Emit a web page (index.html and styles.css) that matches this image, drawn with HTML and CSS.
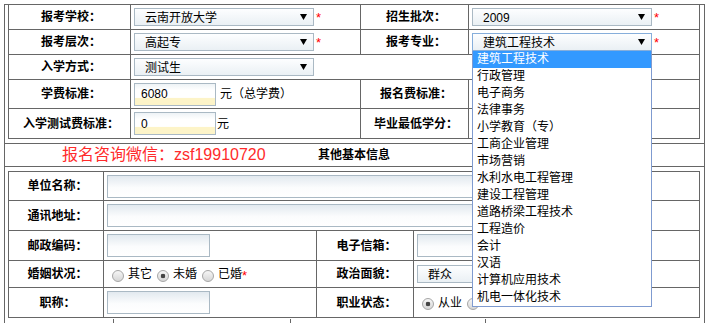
FILE: index.html
```html
<!DOCTYPE html>
<html lang="zh-CN">
<head>
<meta charset="utf-8">
<title>报名信息</title>
<link rel="stylesheet" href="styles.css">
</head>
<body>
<div class="frame">
  <div class="grid g1">
    <div class="c lbl">报考学校：</div>
    <div class="c val"><div class="sel"><span>云南开放大学</span><svg class="arr" width="7" height="6" viewBox="0 0 7 6"><path d="M0 0H7L3.5 6Z"/></svg></div><i class="req">*</i></div>
    <div class="c lbl">招生批次：</div>
    <div class="c val"><div class="sel"><span>2009</span><svg class="arr" width="7" height="6" viewBox="0 0 7 6"><path d="M0 0H7L3.5 6Z"/></svg></div><i class="req">*</i></div>

    <div class="c lbl">报考层次：</div>
    <div class="c val"><div class="sel"><span>高起专</span><svg class="arr" width="7" height="6" viewBox="0 0 7 6"><path d="M0 0H7L3.5 6Z"/></svg></div><i class="req">*</i></div>
    <div class="c lbl">报考专业：</div>
    <div class="c val"><div class="sel open"><span>建筑工程技术</span><svg class="arr" width="7" height="6" viewBox="0 0 7 6"><path d="M0 0H7L3.5 6Z"/></svg>
      <ul class="dd">
        <li class="hl">建筑工程技术</li>
        <li>行政管理</li>
        <li>电子商务</li>
        <li>法律事务</li>
        <li>小学教育（专）</li>
        <li>工商企业管理</li>
        <li>市场营销</li>
        <li>水利水电工程管理</li>
        <li>建设工程管理</li>
        <li>道路桥梁工程技术</li>
        <li>工程造价</li>
        <li>会计</li>
        <li>汉语</li>
        <li>计算机应用技术</li>
        <li>机电一体化技术</li>
      </ul></div><i class="req">*</i></div>

    <div class="c lbl">入学方式：</div>
    <div class="c val span3"><div class="sel"><span>测试生</span><svg class="arr" width="7" height="6" viewBox="0 0 7 6"><path d="M0 0H7L3.5 6Z"/></svg></div></div>

    <div class="c lbl">学费标准：</div>
    <div class="c val"><input class="txt fee" type="text" value="6080"><span class="unit">元（总学费）</span></div>
    <div class="c lbl">报名费标准：</div>
    <div class="c val"></div>

    <div class="c lbl">入学测试费标准：</div>
    <div class="c val"><input class="txt fee" type="text" value="0"><span class="unit tight">元</span></div>
    <div class="c lbl">毕业最低学分：</div>
    <div class="c val"></div>
  </div>

  <div class="title">
    <span class="wx">报名咨询微信：zsf19910720</span>
    <span class="sub">其他基本信息</span>
  </div>

  <div class="grid g2">
    <div class="c lbl">单位名称：</div>
    <div class="c val span3"><input class="txt wide" type="text"></div>

    <div class="c lbl">通讯地址：</div>
    <div class="c val span3"><input class="txt wide" type="text"></div>

    <div class="c lbl">邮政编码：</div>
    <div class="c val"><input class="txt short" type="text"></div>
    <div class="c lbl">电子信箱：</div>
    <div class="c val"><input class="txt mid" type="text"></div>

    <div class="c lbl">婚姻状况：</div>
    <div class="c val radios">
      <input class="rd" type="radio" name="hy"><span class="rt">其它</span>
      <input class="rd" type="radio" name="hy" checked><span class="rt">未婚</span>
      <input class="rd" type="radio" name="hy"><span class="rt last">已婚</span><i class="req">*</i>
    </div>
    <div class="c lbl">政治面貌：</div>
    <div class="c val"><div class="sel small"><span>群众</span><svg class="arr" width="7" height="6" viewBox="0 0 7 6"><path d="M0 0H7L3.5 6Z"/></svg></div></div>

    <div class="c lbl">职称：</div>
    <div class="c val"><input class="txt short" type="text"></div>
    <div class="c lbl">职业状态：</div>
    <div class="c val radios">
      <input class="rd" type="radio" name="zy" checked><span class="rt">从业</span>
      <input class="rd" type="radio" name="zy" aria-label="待业">
    </div>
  </div>

  <div class="g3">
    <div class="c3"></div>
    <div class="c3"></div>
    <div class="c3"></div>
    <div class="c3 none"></div>
  </div>
</div>
</body>
</html>
```

FILE: styles.css
```css
* { box-sizing: border-box; }

body {
  margin: 4px 0 0 4px;
  font-family: "Liberation Sans", "Noto Sans CJK SC", sans-serif;
  font-size: 12px;
  line-height: 16px;
  color: #000;
  background: #fff;
}

.frame {
  width: 701px;
  border: 1px solid #666;
  border-bottom: 0;
}

.grid {
  display: grid;
  width: 692px;
  margin-left: 3px;
  border-left: 1px solid #666;
}

.g1 {
  grid-template-columns: 122px 230px 108px 231px;
  grid-template-rows: 25px 25px 25px 29px 30px;
}

.g2 {
  margin-top: 4px;
  border-top: 1px solid #666;
  grid-template-columns: 95px 213px 97px 286px;
  grid-template-rows: 29px 30px 30px 27px 30px;
}

.c {
  display: flex;
  align-items: center;
  min-width: 0;
  border-right: 1px solid #666;
  border-bottom: 1px solid #666;
}

.lbl {
  justify-content: center;
  font-weight: bold;
  white-space: nowrap;
  padding-left: 3px;
}

.val { padding-left: 3px; }

.span3 { grid-column: span 3; }

.req {
  font-style: normal;
  color: #f00;
  font-size: 13px;
  margin-left: 2px;
  align-self: flex-start;
  margin-top: 5px;
}

.radios .req { margin-top: 7px; margin-left: 0; }

.sel {
  position: relative;
  width: 180px;
  height: 18px;
  border: 1px solid #aab9c4;
  background: linear-gradient(#fdfeff, #eaf0f4);
  display: flex;
  align-items: center;
  justify-content: space-between;
  padding: 2px 6px 0 10px;
  white-space: nowrap;
}

.sel.small { height: 18px; width: 130px; }

.sel.open {
  border-color: #86aedb;
  z-index: 10;
}

.arr { fill: #000; margin-top: -2px; }

.dd {
  position: absolute;
  top: calc(100% + 1px);
  left: -1px;
  width: 180px;
  margin: 0;
  padding: 0;
  list-style: none;
  background: #fff;
  border: 1px solid #7f9bd0;
  border-top: 0;
}

.dd li {
  height: 17px;
  line-height: 17px;
  padding-left: 4px;
  white-space: nowrap;
}

.dd li.hl {
  background: #3399ff;
  color: #fff;
}

.txt {
  height: 23px;
  margin: 0;
  border: 1px solid #aab9c4;
  background: linear-gradient(#e2e9ef, #fbfcfd 55%, #fff);
  padding: 0 6px;
  font: inherit;
  color: #000;
  outline: none;
}

.fee {
  width: 82px;
  background: linear-gradient(#eef3f6 0%, #fff 30%, #fff 64%, #fdf4c8 68%, #fdf4c8 100%);
}

.wide { width: 440px; }
.short { width: 103px; }
.mid { width: 150px; }

.unit { margin-left: 4px; white-space: nowrap; }
.unit.tight { margin-left: 1px; }

.title {
  margin-top: 4px;
  height: 24px;
  border-top: 1px solid #666;
  border-bottom: 1px solid #666;
  display: grid;
  grid-template-columns: 313px auto;
  align-items: center;
}

.wx {
  padding-left: 57px;
  color: #ff2b2b;
  font-size: 16px;
  line-height: 20px;
  white-space: nowrap;
}

.sub { font-weight: bold; }

.radios { padding-left: 8px; }

.rd {
  appearance: none;
  -webkit-appearance: none;
  width: 12px;
  height: 12px;
  margin: 3px 4px 0 0;
  border-radius: 50%;
  border: 1px solid #a6a6a6;
  background: linear-gradient(#f6f6f6, #d6d6d6);
  flex: none;
}

.rd:checked {
  background: radial-gradient(circle, #444 0 2px, transparent 2.6px), linear-gradient(#f6f6f6, #d6d6d6);
}

.rt { margin-right: 5px; white-space: nowrap; }
.rt.last { margin-right: 0; }

.g3 {
  display: grid;
  grid-template-columns: 106px 177px 195px 1fr;
  margin-left: 3px;
  width: 692px;
  height: 20px;
  margin-top: 1px;
}

.c3 { border-right: 1px solid #666; }
.c3.none { border-right: 0; }
```
